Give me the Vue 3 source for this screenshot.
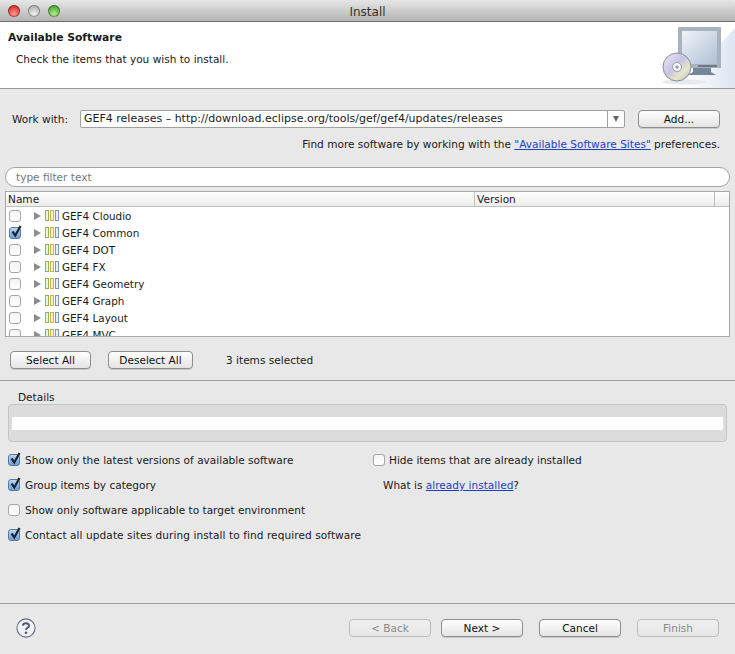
<script setup>
import { ref } from "vue";

const features = ref([
  { name: "GEF4 Cloudio", checked: false },
  { name: "GEF4 Common", checked: true },
  { name: "GEF4 DOT", checked: false },
  { name: "GEF4 FX", checked: false },
  { name: "GEF4 Geometry", checked: false },
  { name: "GEF4 Graph", checked: false },
  { name: "GEF4 Layout", checked: false },
  { name: "GEF4 MVC", checked: false }
]);

const leftOptions = [
  { label: "Show only the latest versions of available software", checked: true },
  { label: "Group items by category", checked: true },
  { label: "Show only software applicable to target environment", checked: false },
  { label: "Contact all update sites during install to find required software", checked: true, loose: true }
];
</script>

<template>
  <div class="window">
    <div class="titlebar">
      <div class="lights">
        <span class="light red"></span>
        <span class="light grey"></span>
        <span class="light green"></span>
      </div>
      <span class="title">Install</span>
    </div>

    <div class="banner">
      <div>
        <h1>Available Software</h1>
        <p>Check the items that you wish to install.</p>
      </div>
      <svg class="banner-art" width="75" height="66" viewBox="0 0 75 66">
        <defs>
          <linearGradient id="fade" x1="0" y1="0" x2="1" y2="0">
            <stop offset="0" stop-color="#fff" />
            <stop offset="1" stop-color="#dfe6f3" />
          </linearGradient>
          <linearGradient id="screen" x1="0" y1="0" x2="1" y2="1">
            <stop offset="0" stop-color="#f1f4f9" />
            <stop offset="1" stop-color="#aebfd6" />
          </linearGradient>
          <linearGradient id="disc" x1="0" y1="0" x2="1" y2="1">
            <stop offset="0" stop-color="#eceef2" />
            <stop offset="0.45" stop-color="#c9c2e6" />
            <stop offset="0.7" stop-color="#e6e6c8" />
            <stop offset="1" stop-color="#aeb4c4" />
          </linearGradient>
        </defs>
        <path d="M20 66 L75 6 V66 Z" fill="url(#fade)" />
        <path d="M33 46 H51 V50 L56 53 H28 L33 50 Z" fill="#76879b" />
        <rect x="18" y="5" width="43" height="41" fill="#a9b3c0" />
        <rect x="22" y="9" width="35" height="33" fill="url(#screen)" />
        <rect x="38" y="43" width="19" height="2" fill="#6d7787" />
        <ellipse cx="24" cy="60" rx="22" ry="2.5" fill="#e6e9ee" />
        <circle cx="17" cy="45" r="14" fill="url(#disc)" stroke="#87909e" />
        <circle cx="17" cy="45" r="4.5" fill="#f2f3f6" stroke="#9aa1ae" />
        <circle cx="17" cy="45" r="1.6" fill="#8f97a6" />
      </svg>
    </div>

    <div class="content">
      <div class="work-row">
        <label class="work-label">Work with:</label>
        <div class="combo">
          <span class="combo-text">GEF4 releases – http://download.eclipse.org/tools/gef/gef4/updates/releases</span>
          <span class="combo-arrow"><i></i></span>
        </div>
        <button class="btn add-btn">Add...</button>
      </div>

      <p class="find-more">
        Find more software by working with the <a href="#">"Available Software Sites"</a> preferences.
      </p>

      <div class="filter">type filter text</div>

      <div class="tree">
        <div class="tree-head">
          <span class="col-name">Name</span>
          <span class="col-version">Version</span>
          <span class="col-rest"></span>
        </div>
        <div class="tree-body">
          <div v-for="item in features" :key="item.name" class="tree-row">
            <span class="check" :class="{ on: item.checked }">
              <svg v-if="item.checked" width="14" height="14" viewBox="0 0 14 14">
                <path d="M3.5 6.5 L6.3 10.5 L11.5 1" fill="none" stroke="#1c2430" stroke-width="2.2" />
              </svg>
            </span>
            <i class="twisty"></i>
            <svg class="feature-icon" width="15" height="11" viewBox="0 0 15 11">
              <rect x="0.5" y="0.5" width="3" height="10" fill="#eef5dc" stroke="#8fb45c" />
              <rect x="5.5" y="0.5" width="3" height="10" fill="#f8f0c8" stroke="#d0b23c" />
              <rect x="10.5" y="0.5" width="3" height="10" fill="#e8eef6" stroke="#7f97b4" />
            </svg>
            <span>{{ item.name }}</span>
          </div>
        </div>
      </div>

      <div class="select-row">
        <button class="btn select-btn">Select All</button>
        <button class="btn deselect-btn">Deselect All</button>
        <span class="selected-count">3 items selected</span>
      </div>

      <div class="rule"></div>

      <div class="details-label">Details</div>
      <div class="details">
        <div class="details-strip"></div>
      </div>

      <div class="options">
        <div class="options-left">
          <label v-for="opt in leftOptions" :key="opt.label" class="option" :class="{ loose: opt.loose }">
            <span class="check" :class="{ on: opt.checked }">
              <svg v-if="opt.checked" width="14" height="14" viewBox="0 0 14 14">
                <path d="M3.5 6.5 L6.3 10.5 L11.5 1" fill="none" stroke="#1c2430" stroke-width="2.2" />
              </svg>
            </span>
            {{ opt.label }}
          </label>
        </div>
        <div class="options-right">
          <label class="option">
            <span class="check"></span>
            Hide items that are already installed
          </label>
          <p class="installed">What is <a href="#">already installed</a>?</p>
        </div>
      </div>
    </div>

    <div class="footer">
      <svg class="help" width="20" height="20" viewBox="0 0 22 22">
        <circle cx="11" cy="11" r="10" fill="#f1f2f4" stroke="#5d6b86" stroke-width="1.2" />
        <path d="M7.6 8.4 C7.8 4.9 14.4 4.9 14.4 8.4 C14.4 10.8 11 10.6 11 13.2" fill="none" stroke="#4a5a78" stroke-width="2.2" />
        <circle cx="11" cy="16.2" r="1.4" fill="#4a5a78" />
      </svg>
      <div class="footer-buttons">
        <button class="btn wide" disabled>&lt; Back</button>
        <button class="btn wide next">Next &gt;</button>
        <button class="btn wide">Cancel</button>
        <button class="btn wide" disabled>Finish</button>
      </div>
    </div>
  </div>
</template>

<style scoped>
.window {
  width: 735px;
  height: 654px;
  display: flex;
  flex-direction: column;
  background: #e8e8e8;
  color: #1a1a1a;
  font-family: "DejaVu Sans", sans-serif;
  font-size: 10.55px;
  overflow: hidden;
}

.titlebar {
  height: 21px;
  flex: none;
  position: relative;
  display: flex;
  align-items: center;
  justify-content: center;
  background: linear-gradient(#e6e6e6, #b4b4b4);
  border-bottom: 1px solid #6e6e6e;
  border-radius: 4px 4px 0 0;
}

.lights {
  position: absolute;
  left: 8px;
  top: 5px;
  display: flex;
  gap: 8px;
}

.light {
  width: 12px;
  height: 12px;
  border-radius: 50%;
  box-shadow: inset 0 0 0 1px rgba(0, 0, 0, 0.3);
}

.red {
  background: radial-gradient(circle at 50% 75%, #ff9a94, #d8332e 70%);
}

.grey {
  background: radial-gradient(circle at 50% 75%, #f0f0f0, #b4b4b4 70%);
}

.green {
  background: radial-gradient(circle at 50% 75%, #b4ee8c, #4fa83a 70%);
}

.title {
  font-size: 12px;
  padding-top: 2px;
  color: #333;
}

.banner {
  height: 66px;
  flex: none;
  display: flex;
  justify-content: space-between;
  background: #fff;
  border-bottom: 1px solid #9c9c9c;
}

.banner h1 {
  margin: 9px 0 0 8px;
  font-size: 10.75px;
  font-weight: bold;
  line-height: 14px;
}

.banner p {
  margin: 7px 0 0 16px;
  line-height: 14px;
}

.banner-art {
  flex: none;
}

.content {
  flex: 1;
  display: flex;
  flex-direction: column;
  padding: 0 5px;
}

.work-row {
  display: flex;
  align-items: center;
  height: 19px;
  margin-top: 20px;
  padding-left: 7px;
}

.work-label {
  width: 68px;
}

.combo {
  width: 545px;
  height: 18px;
  box-sizing: border-box;
  display: flex;
  align-items: center;
  background: #fff;
  border: 1px solid #a0a0a0;
  border-radius: 2px;
}

.combo-text {
  flex: 1;
  padding-left: 3px;
  font-size: 11px;
  white-space: nowrap;
  overflow: hidden;
}

.combo-arrow {
  width: 16px;
  height: 100%;
  display: flex;
  align-items: center;
  justify-content: center;
  border-left: 1px solid #a0a0a0;
}

.combo-arrow i {
  border-left: 3.5px solid transparent;
  border-right: 3.5px solid transparent;
  border-top: 6px solid #666;
}

.btn {
  box-sizing: border-box;
  height: 18px;
  padding: 0;
  font: inherit;
  color: #111;
  background: linear-gradient(#ffffff, #f1f1f1 50%, #e4e4e4);
  border: 1px solid #8e8e8e;
  border-radius: 4px;
  box-shadow: 0 1px 0 #c8c8c8;
}

.btn:disabled {
  color: #8a8a8a;
  border-color: #bdbdbd;
  background: linear-gradient(#f0f0f0, #e6e6e6);
  box-shadow: none;
}

.add-btn {
  width: 82px;
  margin-left: 13px;
}

.find-more {
  margin: 9px 10px 0 0;
  line-height: 14px;
  text-align: right;
}

a {
  color: #1a3fc4;
  text-decoration: underline;
}

.filter {
  box-sizing: border-box;
  height: 20px;
  margin-top: 16px;
  padding-left: 10px;
  line-height: 18px;
  color: #777;
  background: #fff;
  border: 1px solid #a4a4a4;
  border-radius: 10px;
}

.tree {
  box-sizing: border-box;
  height: 146px;
  margin-top: 4px;
  overflow: hidden;
  background: #fff;
  border: 1px solid #a8a8a8;
}

.tree-head {
  height: 14px;
  display: flex;
  line-height: 14px;
  background: linear-gradient(#ffffff, #ececec);
  border-bottom: 1px solid #c0c0c0;
}

.col-name {
  width: 466px;
  padding-left: 2px;
  border-right: 1px solid #bbb;
}

.col-version {
  width: 237px;
  padding-left: 2px;
  border-right: 1px solid #bbb;
}

.tree-row {
  height: 17px;
  display: flex;
  align-items: center;
  font-size: 10.4px;
  white-space: nowrap;
}

.tree-row .check {
  margin-left: 3px;
  margin-right: 13px;
}

.twisty {
  width: 0;
  height: 0;
  margin-right: 4px;
  border-top: 4.5px solid transparent;
  border-bottom: 4.5px solid transparent;
  border-left: 7px solid #8c8c8c;
}

.feature-icon {
  margin-right: 2px;
}

.check {
  width: 12px;
  height: 12px;
  flex: none;
  position: relative;
  box-sizing: border-box;
  background: linear-gradient(#f4f4f4, #ffffff);
  border: 1px solid #a6a6a6;
  border-radius: 3px;
}

.check.on {
  background: linear-gradient(#bcd6f4, #6a9fdc);
  border-color: #5c7898;
}

.check svg {
  position: absolute;
  left: -1px;
  top: -3px;
}

.select-row {
  display: flex;
  align-items: center;
  height: 18px;
  margin-top: 14px;
  padding-left: 5px;
}

.select-btn {
  width: 81px;
}

.deselect-btn {
  width: 85px;
  margin-left: 17px;
}

.selected-count {
  margin-left: 33px;
}

.rule {
  height: 1px;
  margin: 11px -5px 0;
  background: #a0a0a0;
}

.details-label {
  margin: 9px 0 0 13px;
  line-height: 14px;
}

.details {
  box-sizing: border-box;
  height: 38px;
  margin: 0 3px;
  padding: 12px 3px 0;
  background: #dcdcdc;
  border: 1px solid #c4c4c4;
  border-radius: 4px;
}

.details-strip {
  height: 13px;
  background: #fff;
}

.options {
  display: flex;
  margin-top: 11px;
  padding-left: 3px;
}

.options-left {
  width: 365px;
  display: flex;
  flex-direction: column;
  gap: 11px;
}

.options-right {
  display: flex;
  flex-direction: column;
  gap: 11px;
}

.option {
  height: 14px;
  display: flex;
  align-items: center;
  gap: 5px;
  white-space: nowrap;
}

.options-right .option {
  gap: 4px;
}

.option.loose {
  letter-spacing: 0.08px;
}

.installed {
  margin: 0 0 0 10px;
  line-height: 14px;
}

.footer {
  height: 51px;
  flex: none;
  box-sizing: border-box;
  display: flex;
  align-items: flex-start;
  justify-content: space-between;
  border-top: 1px solid #a0a0a0;
  padding: 14px 16px 0 16px;
}

.footer-buttons {
  display: flex;
  gap: 16px;
  margin-top: 1px;
}

.wide {
  width: 82px;
}

.footer-buttons .next {
  margin-left: -6px;
}
</style>

<style>
html,
body {
  margin: 0;
  background: #e8e8e8;
}
</style>
